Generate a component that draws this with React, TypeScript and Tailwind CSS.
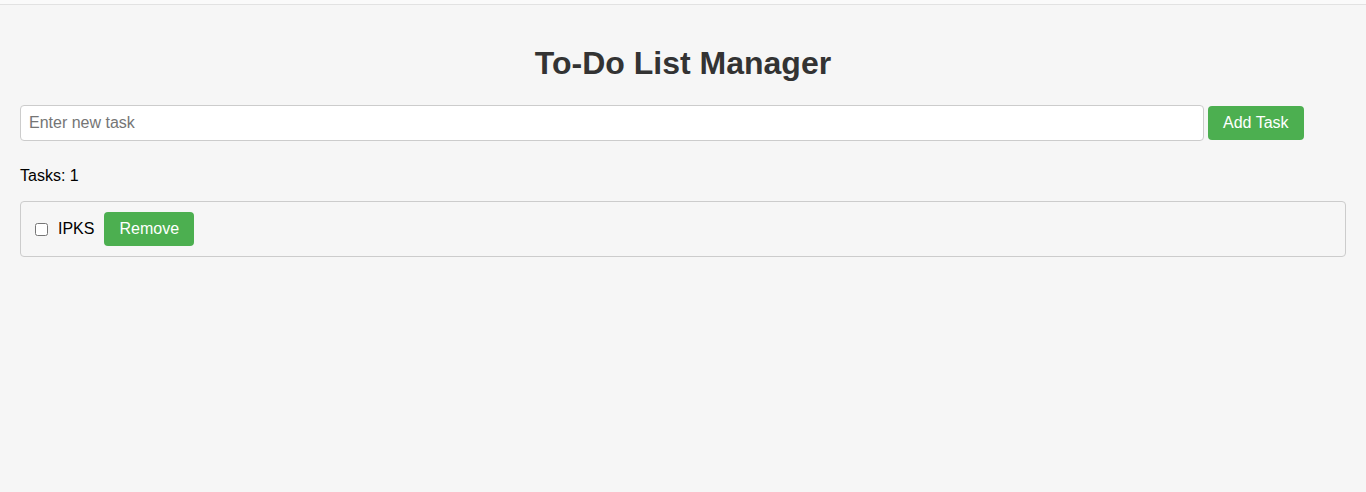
import { useState } from "react";

interface ITask {
  id: number;
  text: string;
  done: boolean;
}

const App = () => {
  const [tasks, setTasks] = useState<ITask[]>([{ id: 1, text: "IPKS", done: false }]);
  const [input, setInput] = useState("");

  const addTask = () => {
    if (!input.trim()) return;
    setTasks([...tasks, { id: Date.now(), text: input.trim(), done: false }]);
    setInput("");
  };

  const toggleTask = (id: number) =>
    setTasks(tasks.map((t) => (t.id === id ? { ...t, done: !t.done } : t)));

  const removeTask = (id: number) => setTasks(tasks.filter((t) => t.id !== id));

  return (
    <div className="min-h-screen bg-[#f6f6f6] font-['Liberation_Sans',Arial,sans-serif] text-black">
      <div className="h-1 bg-[#fafafa]" />
      <div className="border-t border-[#e2e2e2] p-5">
        <h1 className="mt-[20px] mb-[23px] text-center text-[32px] leading-[37px] font-bold text-[#333]">
          To-Do List Manager
        </h1>

        <div className="flex items-center gap-1">
          <input
            type="text"
            value={input}
            onChange={(e) => setInput(e.target.value)}
            placeholder="Enter new task"
            className="h-9 w-[1184px] rounded-[4px] border border-[#ccc] bg-white px-2 text-base text-black outline-none placeholder:text-[#757575]"
          />
          <button
            onClick={addTask}
            className="h-[34px] rounded-[4px] bg-[#4caf50] px-[15px] text-base text-white"
          >
            Add Task
          </button>
        </div>

        <p className="mt-[26px] text-base leading-[18px]">Tasks: {tasks.length}</p>

        <ul className="mt-[16px] flex flex-col gap-2.5">
          {tasks.map((task) => (
            <li
              key={`keyTask${task.id}`}
              className="flex items-center rounded-[4px] border border-[#ccc] p-2.5"
            >
              <input
                type="checkbox"
                checked={task.done}
                onChange={() => toggleTask(task.id)}
                className="ml-1 mr-2.5 h-[13px] w-[13px]"
              />
              <span className={`text-base ${task.done ? "line-through" : ""}`}>{task.text}</span>
              <button
                onClick={() => removeTask(task.id)}
                className="ml-[10px] h-[34px] rounded-[4px] bg-[#4caf50] px-[15px] text-base text-white"
              >
                Remove
              </button>
            </li>
          ))}
        </ul>
      </div>
    </div>
  );
};

export default App;
